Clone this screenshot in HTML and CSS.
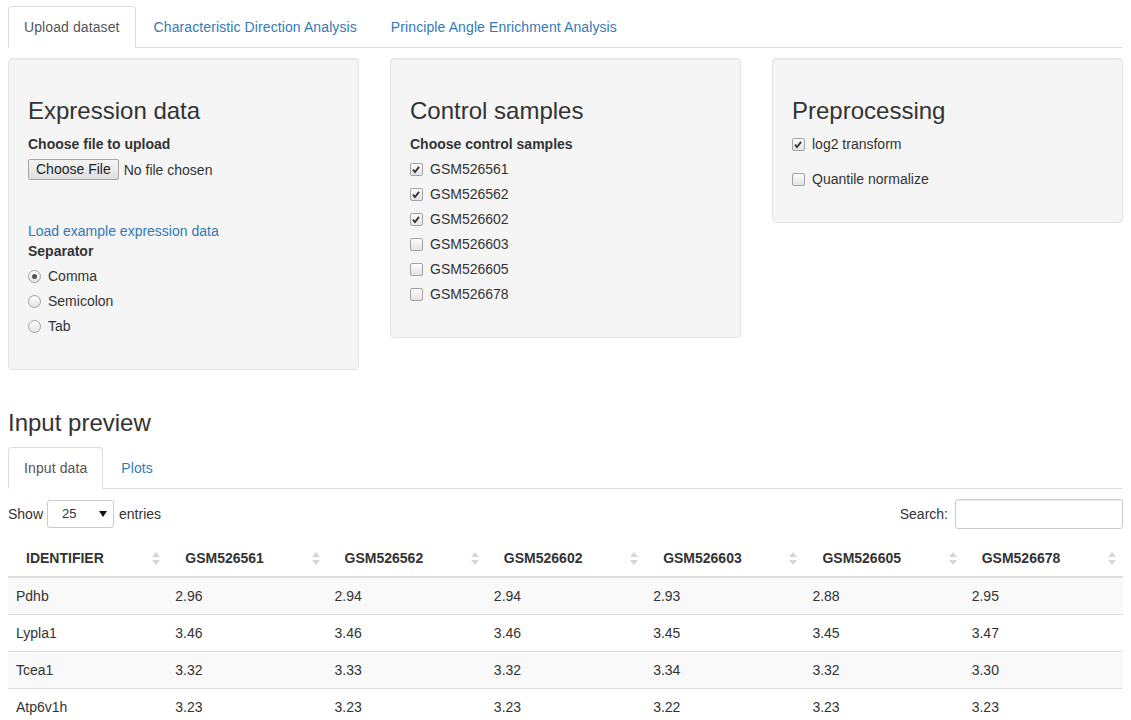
FILE: index.html
```html
<!DOCTYPE html>
<html>
<head>
<meta charset="utf-8">
<title>Upload dataset</title>
<link rel="stylesheet" href="styles.css">
</head>
<body>
<div class="page">
  <ul class="tabs">
    <li class="tab active">Upload dataset</li>
    <li class="tab">Characteristic Direction Analysis</li>
    <li class="tab">Principle Angle Enrichment Analysis</li>
  </ul>

  <div class="panels">
    <div class="well">
      <h3 class="title">Expression data</h3>
      <div class="field-label">Choose file to upload</div>
      <div class="file-row">
        <button class="file-btn" type="button">Choose File</button>
        <span class="file-name">No file chosen</span>
      </div>
      <a class="link example-link">Load example expression data</a>
      <div class="field-label">Separator</div>
      <div class="options">
        <label class="opt"><span class="radio checked"></span>Comma</label>
        <label class="opt"><span class="radio"></span>Semicolon</label>
        <label class="opt"><span class="radio"></span>Tab</label>
      </div>
    </div>

    <div class="well">
      <h3 class="title">Control samples</h3>
      <div class="field-label">Choose control samples</div>
      <div class="options">
        <label class="opt"><span class="check checked"><svg viewBox="0 0 13 13" width="13" height="13"><path d="M3.2 6.6 L5.4 9.2 L9.8 3.6" fill="none" stroke="#333" stroke-width="2"/></svg></span>GSM526561</label>
        <label class="opt"><span class="check checked"><svg viewBox="0 0 13 13" width="13" height="13"><path d="M3.2 6.6 L5.4 9.2 L9.8 3.6" fill="none" stroke="#333" stroke-width="2"/></svg></span>GSM526562</label>
        <label class="opt"><span class="check checked"><svg viewBox="0 0 13 13" width="13" height="13"><path d="M3.2 6.6 L5.4 9.2 L9.8 3.6" fill="none" stroke="#333" stroke-width="2"/></svg></span>GSM526602</label>
        <label class="opt"><span class="check"></span>GSM526603</label>
        <label class="opt"><span class="check"></span>GSM526605</label>
        <label class="opt"><span class="check"></span>GSM526678</label>
      </div>
    </div>

    <div class="well">
      <h3 class="title">Preprocessing</h3>
      <div class="options spaced">
        <label class="opt"><span class="check checked"><svg viewBox="0 0 13 13" width="13" height="13"><path d="M3.2 6.6 L5.4 9.2 L9.8 3.6" fill="none" stroke="#333" stroke-width="2"/></svg></span>log2 transform</label>
        <label class="opt"><span class="check"></span>Quantile normalize</label>
      </div>
    </div>
  </div>

  <h3 class="title">Input preview</h3>
  <ul class="tabs">
    <li class="tab active">Input data</li>
    <li class="tab">Plots</li>
  </ul>

  <div class="dt-controls">
    <div class="dt-length">
      Show
      <span class="select-wrap">
        <select class="dt-select"><option>25</option></select>
        <svg class="select-arrow" viewBox="0 0 8 6" width="8" height="6"><path d="M0 0 H8 L4 6 Z" fill="#111"/></svg>
      </span>
      entries
    </div>
    <div class="dt-search">Search:<input class="search-input" type="text"></div>
  </div>

  <table class="dt">
    <thead>
      <tr>
        <th>IDENTIFIER<svg class="sort" viewBox="0 0 8 13" width="8" height="13"><path d="M4 0 L8 5 H0 Z M0 8 H8 L4 13 Z" fill="#d6d6d6"/></svg></th>
        <th>GSM526561<svg class="sort" viewBox="0 0 8 13" width="8" height="13"><path d="M4 0 L8 5 H0 Z M0 8 H8 L4 13 Z" fill="#d6d6d6"/></svg></th>
        <th>GSM526562<svg class="sort" viewBox="0 0 8 13" width="8" height="13"><path d="M4 0 L8 5 H0 Z M0 8 H8 L4 13 Z" fill="#d6d6d6"/></svg></th>
        <th>GSM526602<svg class="sort" viewBox="0 0 8 13" width="8" height="13"><path d="M4 0 L8 5 H0 Z M0 8 H8 L4 13 Z" fill="#d6d6d6"/></svg></th>
        <th>GSM526603<svg class="sort" viewBox="0 0 8 13" width="8" height="13"><path d="M4 0 L8 5 H0 Z M0 8 H8 L4 13 Z" fill="#d6d6d6"/></svg></th>
        <th>GSM526605<svg class="sort" viewBox="0 0 8 13" width="8" height="13"><path d="M4 0 L8 5 H0 Z M0 8 H8 L4 13 Z" fill="#d6d6d6"/></svg></th>
        <th>GSM526678<svg class="sort" viewBox="0 0 8 13" width="8" height="13"><path d="M4 0 L8 5 H0 Z M0 8 H8 L4 13 Z" fill="#d6d6d6"/></svg></th>
      </tr>
    </thead>
    <tbody>
      <tr><td>Pdhb</td><td>2.96</td><td>2.94</td><td>2.94</td><td>2.93</td><td>2.88</td><td>2.95</td></tr>
      <tr><td>Lypla1</td><td>3.46</td><td>3.46</td><td>3.46</td><td>3.45</td><td>3.45</td><td>3.47</td></tr>
      <tr><td>Tcea1</td><td>3.32</td><td>3.33</td><td>3.32</td><td>3.34</td><td>3.32</td><td>3.30</td></tr>
      <tr><td>Atp6v1h</td><td>3.23</td><td>3.23</td><td>3.23</td><td>3.22</td><td>3.23</td><td>3.23</td></tr>
    </tbody>
  </table>
</div>
</body>
</html>
```

FILE: styles.css
```css
* {
  box-sizing: border-box;
}

html, body {
  overflow: hidden;
}

body {
  margin: 0;
  font-family: "Liberation Sans", Arial, Helvetica, sans-serif;
  font-size: 14px;
  line-height: 20px;
  color: #333;
  background: #fff;
}

.page {
  padding: 6px 8px 0;
}

/* Tabs */
.tabs {
  list-style: none;
  margin: 0;
  padding: 0;
  display: flex;
  border-bottom: 1px solid #ddd;
}

.tab {
  margin-bottom: -1px;
  margin-right: 2px;
  padding: 10px 15px;
  line-height: 20px;
  letter-spacing: 0.1px;
  border: 1px solid transparent;
  border-radius: 4px 4px 0 0;
  color: #337ab7;
  cursor: pointer;
}

.tab.active {
  color: #555;
  background: #fff;
  border-color: #ddd #ddd transparent;
}

/* Panels */
.panels {
  display: grid;
  grid-template-columns: repeat(3, 1fr);
  column-gap: 31px;
  align-items: start;
  margin-top: 10px;
  margin-bottom: 40px;
}

.well {
  background: #f5f5f5;
  border: 1px solid #e3e3e3;
  border-radius: 4px;
  padding: 19px;
  box-shadow: inset 0 1px 1px rgba(0, 0, 0, 0.05);
}

.title {
  margin: 20px 0 10px;
  font-size: 24px;
  font-weight: normal;
  line-height: 26.4px;
  color: #333;
}

.field-label {
  font-weight: bold;
  margin-bottom: 5px;
}

.file-row {
  display: flex;
  align-items: center;
  height: 21px;
}

.file-btn {
  font-family: "Liberation Sans", Arial, sans-serif;
  font-size: 14px;
  line-height: 17px;
  height: 21px;
  padding: 1px 7px;
  color: #222;
  background: linear-gradient(#f6f6f6, #dedede);
  border: 1px solid #a6a6a6;
  border-radius: 2px;
}

.file-name {
  margin-left: 5px;
}

.link {
  color: #337ab7;
  text-decoration: none;
}

.example-link {
  display: block;
  margin-top: 41px;
}

.options {
  display: flex;
  flex-direction: column;
  gap: 5px;
  margin-bottom: 14px;
}

.options.spaced {
  gap: 15px;
}

.opt {
  display: flex;
  align-items: center;
  height: 20px;
}

.check,
.radio {
  flex: none;
  width: 13px;
  height: 13px;
  margin-right: 7px;
  border: 1px solid #a3a3a3;
  background: linear-gradient(#fcfcfc, #e4e4e4);
  display: inline-flex;
}

.check {
  border-radius: 2px;
}

.check svg {
  margin: -1px 0 0 -1px;
}

.radio {
  border-radius: 50%;
  align-items: center;
  justify-content: center;
}

.radio.checked::after {
  content: "";
  width: 5px;
  height: 5px;
  border-radius: 50%;
  background: #555;
}

/* DataTables controls */
.dt-controls {
  display: flex;
  justify-content: space-between;
  align-items: center;
  height: 30px;
  margin-top: 10px;
}

.dt-length {
  display: flex;
  align-items: center;
}

.select-wrap {
  position: relative;
  display: inline-block;
  margin: 0 5px 0 4px;
}

.dt-select {
  appearance: none;
  -webkit-appearance: none;
  width: 67px;
  height: 28px;
  padding: 0 0 0 14px;
  font-family: "Liberation Sans", Arial, sans-serif;
  font-size: 13px;
  color: #333;
  background: #fff;
  border: 1px solid #ccc;
  border-radius: 3px;
  display: block;
}

.select-arrow {
  position: absolute;
  right: 7px;
  top: 11px;
  pointer-events: none;
}

.dt-search {
  display: flex;
  align-items: center;
}

.search-input {
  width: 168px;
  height: 30px;
  margin-left: 7px;
  border: 1px solid #ccc;
  border-radius: 3px;
  box-shadow: inset 0 1px 1px rgba(0, 0, 0, 0.075);
  font-family: "Liberation Sans", Arial, sans-serif;
  font-size: 14px;
}

/* Table */
.dt {
  width: 100%;
  table-layout: fixed;
  border-collapse: collapse;
  margin-top: 11px;
}

.dt th {
  position: relative;
  text-align: left;
  font-weight: bold;
  padding: 8px 18px;
  line-height: 20px;
  border-bottom: 2px solid #ddd;
}

.sort {
  position: absolute;
  right: 7px;
  top: 12px;
}

.dt td {
  padding: 8px;
  line-height: 20px;
  border-top: 1px solid #ddd;
}

.dt tbody tr:nth-child(odd) td {
  background: #f9f9f9;
}
```
